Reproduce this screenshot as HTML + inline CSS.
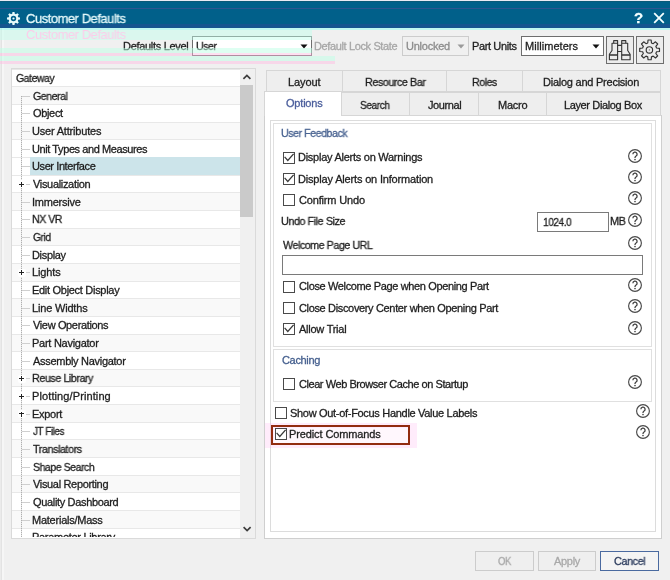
<!DOCTYPE html>
<html><head><meta charset="utf-8"><style>
html,body{margin:0;padding:0;background:#f0f0f0}
body{width:670px;height:580px;position:relative;overflow:hidden;background:#f0f0f0;font-family:"Liberation Sans",sans-serif}
.t{position:absolute;white-space:nowrap;font-family:"Liberation Sans",sans-serif;-webkit-text-stroke:0.3px currentColor;will-change:transform}
.r{position:absolute}
</style></head><body>
<div class="r" style="left:0px;top:0px;width:670px;height:1px;background:#eaeaf4"></div>
<div class="r" style="left:0px;top:1px;width:670px;height:27px;background:#01608a"></div>
<div class="r" style="left:0px;top:1px;width:670px;height:1px;background:#0a5a78"></div>
<div class="r" style="left:0px;top:8px;width:670px;height:1px;background:#2f5590"></div>
<div class="r" style="left:0px;top:24px;width:670px;height:4px;background:#15558f"></div>
<svg class="r" style="left:6px;top:11px" width="15" height="15" viewBox="0 0 15 15">
<path fill="#e8fbfb" fill-rule="evenodd" d="M6.23 2.77 L6.47 0.98 L8.53 0.98 L8.77 2.77 L9.95 3.26 L11.38 2.16 L12.84 3.62 L11.74 5.05 L12.23 6.23 L14.02 6.47 L14.02 8.53 L12.23 8.77 L11.74 9.95 L12.84 11.38 L11.38 12.84 L9.95 11.74 L8.77 12.23 L8.53 14.02 L6.47 14.02 L6.23 12.23 L5.05 11.74 L3.62 12.84 L2.16 11.38 L3.26 9.95 L2.77 8.77 L0.98 8.53 L0.98 6.47 L2.77 6.23 L3.26 5.05 L2.16 3.62 L3.62 2.16 L5.05 3.26Z M7.5 4.8a2.7 2.7 0 1 0 0 5.4a2.7 2.7 0 1 0 0-5.4z"/>
<circle cx="7.5" cy="7.5" r="1.1" fill="#e8fbfb"/></svg>
<div class="t" style="left:26.10px;top:12.10px;color:#e4f8fa;font-size:13px;line-height:13px;font-weight:normal;letter-spacing:-0.450px;transform:scaleX(0.995);transform-origin:0.00px 0;">Customer Defaults</div>
<div class="t" style="left:634.2px;top:9.5px;color:#f4ffff;font-size:15px;line-height:15px;font-weight:bold">?</div>
<svg class="r" style="left:653px;top:12px" width="12" height="12" viewBox="0 0 12 12"><path d="M1.2 1.2L10.8 10.8M10.8 1.2L1.2 10.8" stroke="#f4ffff" stroke-width="1.8"/></svg>
<div class="r" style="left:0px;top:28px;width:1px;height:552px;background:#ebebeb"></div>
<div class="r" style="left:1px;top:28px;width:1px;height:552px;background:#e3e3e3"></div>
<div class="r" style="left:2px;top:28px;width:2px;height:552px;background:#f6f6f6"></div>
<div class="t" style="left:122.80px;top:40.80px;color:#1e1e1e;font-size:11px;line-height:11px;font-weight:normal;letter-spacing:-0.308px;">Defaults Level</div>
<div class="r" style="left:192px;top:36px;width:120px;height:20px;background:#fff;border:1px solid #6e6e6e;box-sizing:border-box"></div>
<div class="t" style="left:196.20px;top:40.80px;color:#1e1e1e;font-size:11px;line-height:11px;font-weight:normal;letter-spacing:-0.450px;transform:scaleX(0.954);transform-origin:1.00px 0;">User</div>
<svg class="r" style="left:300px;top:44px" width="8" height="5" viewBox="0 0 8 5"><path d="M0.5 0.5h7L4 4.5z" fill="#111"/></svg>
<div class="t" style="left:313.80px;top:40.80px;color:#a6a6a6;font-size:11px;line-height:11px;font-weight:normal;letter-spacing:-0.371px;">Default Lock State</div>
<div class="r" style="left:402px;top:36px;width:67px;height:20px;background:#f0f0f0;border:1px solid #cccccc;box-sizing:border-box"></div>
<div class="t" style="left:405.90px;top:40.80px;color:#8c8c8c;font-size:11px;line-height:11px;font-weight:normal;letter-spacing:-0.243px;">Unlocked</div>
<svg class="r" style="left:457px;top:44px" width="8" height="5" viewBox="0 0 8 5"><path d="M0.5 0.5h7L4 4.5z" fill="#9a9a9a"/></svg>
<div class="t" style="left:471.60px;top:40.80px;color:#1e1e1e;font-size:11px;line-height:11px;font-weight:normal;letter-spacing:-0.378px;">Part Units</div>
<div class="r" style="left:521px;top:36px;width:83px;height:20px;background:#fff;border:1px solid #6e6e6e;box-sizing:border-box"></div>
<div class="t" style="left:524.60px;top:40.80px;color:#1e1e1e;font-size:11px;line-height:11px;font-weight:normal;letter-spacing:0.050px;">Millimeters</div>
<svg class="r" style="left:592px;top:44px" width="8" height="5" viewBox="0 0 8 5"><path d="M0.5 0.5h7L4 4.5z" fill="#111"/></svg>
<div class="r" style="left:606px;top:36px;width:28px;height:28px;background:#ececec;border:1px solid #6e6e6e;box-sizing:border-box"></div>
<div class="r" style="left:636px;top:36px;width:28px;height:28px;background:#ececec;border:1px solid #6e6e6e;box-sizing:border-box"></div>
<svg class="r" style="left:606px;top:36px" width="28" height="28" viewBox="0 0 28 28">
<g fill="none" stroke="#333" stroke-width="1.1" stroke-linejoin="round">
<path d="M7.7 7.2V4.6h3.9v2.6M15.7 7.2V4.6h4.1v2.6"/>
<path d="M6 7.2h5.6v16.5H3.4v-5.4L6 14.5z"/>
<path d="M21.7 7.2h-6v16.5h8.4v-5.4L21.7 14.5z"/>
<path d="M11.6 9.4h4.1M11.6 15.5h4.1"/>
<path d="M3.4 19h8.2M15.7 19h8.4" stroke-width="1.5"/>
</g></svg>
<svg class="r" style="left:636px;top:36px" width="28" height="28" viewBox="0 0 28 28">
<g fill="none" stroke="#333" stroke-width="1.15" stroke-linejoin="round">
<path d="M11.74 6.95 L12.04 4.02 L15.16 4.02 L15.46 6.95 L17.20 7.66 L19.48 5.81 L21.69 8.02 L19.84 10.30 L20.55 12.04 L23.48 12.34 L23.48 15.46 L20.55 15.76 L19.84 17.50 L21.69 19.78 L19.48 21.99 L17.20 20.14 L15.46 20.85 L15.16 23.78 L12.04 23.78 L11.74 20.85 L10.00 20.14 L7.72 21.99 L5.51 19.78 L7.36 17.50 L6.65 15.76 L3.72 15.46 L3.72 12.34 L6.65 12.04 L7.36 10.30 L5.51 8.02 L7.72 5.81 L10.00 7.66Z"/>
<circle cx="13.4" cy="13.9" r="3.2"/>
</g><circle cx="13.4" cy="13.9" r="0.7" fill="#777"/></svg>
<div class="r" style="left:11px;top:68px;width:245px;height:471px;background:#fff;border:1px solid #dadada;box-sizing:border-box"></div>
<div class="r" style="left:12px;top:69px;width:228px;height:468px;overflow:hidden">
<div class="r" style="left:0px;top:-0.40px;width:228px;height:17.66px;background:#ffffff;border-top:1px solid #e8e8e8;box-sizing:border-box"></div>
<div class="t" style="left:4.20px;top:4.00px;color:#1e1e1e;font-size:11px;line-height:11px;font-weight:normal;letter-spacing:-0.450px;transform:scaleX(0.949);transform-origin:0.00px 0;">Gateway</div>
<div class="r" style="left:0px;top:17.26px;width:228px;height:17.66px;background:#f9f9f9;border-top:1px solid #e8e8e8;box-sizing:border-box"></div>
<div class="t" style="left:21.00px;top:21.66px;color:#1e1e1e;font-size:11px;line-height:11px;font-weight:normal;letter-spacing:-0.450px;transform:scaleX(0.959);transform-origin:0.00px 0;">General</div>
<div class="r" style="left:10px;top:26.66px;width:7.5px;height:1px;background:#cfcfcf"></div>
<div class="r" style="left:0px;top:34.92px;width:228px;height:17.66px;background:#ffffff;border-top:1px solid #e8e8e8;box-sizing:border-box"></div>
<div class="t" style="left:21.00px;top:39.32px;color:#1e1e1e;font-size:11px;line-height:11px;font-weight:normal;letter-spacing:-0.340px;">Object</div>
<div class="r" style="left:10px;top:44.32px;width:7.5px;height:1px;background:#cfcfcf"></div>
<div class="r" style="left:0px;top:52.58px;width:228px;height:17.66px;background:#f9f9f9;border-top:1px solid #e8e8e8;box-sizing:border-box"></div>
<div class="t" style="left:20.00px;top:56.98px;color:#1e1e1e;font-size:11px;line-height:11px;font-weight:normal;letter-spacing:-0.193px;">User Attributes</div>
<div class="r" style="left:10px;top:61.98px;width:7.5px;height:1px;background:#cfcfcf"></div>
<div class="r" style="left:0px;top:70.24px;width:228px;height:17.66px;background:#ffffff;border-top:1px solid #e8e8e8;box-sizing:border-box"></div>
<div class="t" style="left:20.00px;top:74.64px;color:#1e1e1e;font-size:11px;line-height:11px;font-weight:normal;letter-spacing:-0.409px;">Unit Types and Measures</div>
<div class="r" style="left:10px;top:79.64px;width:7.5px;height:1px;background:#cfcfcf"></div>
<div class="r" style="left:0px;top:87.90px;width:228px;height:17.66px;background:#fff;border-top:1px solid #e8e8e8;box-sizing:border-box"></div>
<div class="r" style="left:17.6px;top:88.30px;width:211px;height:17.26px;background:#cce4ea"></div>
<div class="t" style="left:20.00px;top:92.30px;color:#1e1e1e;font-size:11px;line-height:11px;font-weight:normal;letter-spacing:-0.408px;">User Interface</div>
<div class="r" style="left:10px;top:97.30px;width:7.5px;height:1px;background:#cfcfcf"></div>
<div class="r" style="left:0px;top:105.56px;width:228px;height:17.66px;background:#ffffff;border-top:1px solid #e8e8e8;box-sizing:border-box"></div>
<div class="t" style="left:21.00px;top:109.96px;color:#1e1e1e;font-size:11px;line-height:11px;font-weight:normal;letter-spacing:-0.325px;">Visualization</div>
<div class="r" style="left:10px;top:114.96px;width:7.5px;height:1px;background:#cfcfcf"></div>
<div class="r" style="left:0px;top:123.22px;width:228px;height:17.66px;background:#f9f9f9;border-top:1px solid #e8e8e8;box-sizing:border-box"></div>
<div class="t" style="left:20.00px;top:127.62px;color:#1e1e1e;font-size:11px;line-height:11px;font-weight:normal;letter-spacing:-0.225px;">Immersive</div>
<div class="r" style="left:10px;top:132.62px;width:7.5px;height:1px;background:#cfcfcf"></div>
<div class="r" style="left:0px;top:140.88px;width:228px;height:17.66px;background:#ffffff;border-top:1px solid #e8e8e8;box-sizing:border-box"></div>
<div class="t" style="left:20.00px;top:145.28px;color:#1e1e1e;font-size:11px;line-height:11px;font-weight:normal;letter-spacing:-0.450px;transform:scaleX(0.957);transform-origin:1.00px 0;">NX VR</div>
<div class="r" style="left:10px;top:150.28px;width:7.5px;height:1px;background:#cfcfcf"></div>
<div class="r" style="left:0px;top:158.54px;width:228px;height:17.66px;background:#f9f9f9;border-top:1px solid #e8e8e8;box-sizing:border-box"></div>
<div class="t" style="left:21.00px;top:162.94px;color:#1e1e1e;font-size:11px;line-height:11px;font-weight:normal;letter-spacing:-0.450px;transform:scaleX(0.936);transform-origin:0.00px 0;">Grid</div>
<div class="r" style="left:10px;top:167.94px;width:7.5px;height:1px;background:#cfcfcf"></div>
<div class="r" style="left:0px;top:176.20px;width:228px;height:17.66px;background:#ffffff;border-top:1px solid #e8e8e8;box-sizing:border-box"></div>
<div class="t" style="left:20.00px;top:180.60px;color:#1e1e1e;font-size:11px;line-height:11px;font-weight:normal;letter-spacing:-0.333px;">Display</div>
<div class="r" style="left:10px;top:185.60px;width:7.5px;height:1px;background:#cfcfcf"></div>
<div class="r" style="left:0px;top:193.86px;width:228px;height:17.66px;background:#f9f9f9;border-top:1px solid #e8e8e8;box-sizing:border-box"></div>
<div class="t" style="left:20.00px;top:198.26px;color:#1e1e1e;font-size:11px;line-height:11px;font-weight:normal;letter-spacing:-0.120px;">Lights</div>
<div class="r" style="left:10px;top:203.26px;width:7.5px;height:1px;background:#cfcfcf"></div>
<div class="r" style="left:0px;top:211.52px;width:228px;height:17.66px;background:#ffffff;border-top:1px solid #e8e8e8;box-sizing:border-box"></div>
<div class="t" style="left:20.00px;top:215.92px;color:#1e1e1e;font-size:11px;line-height:11px;font-weight:normal;letter-spacing:-0.294px;">Edit Object Display</div>
<div class="r" style="left:10px;top:220.92px;width:7.5px;height:1px;background:#cfcfcf"></div>
<div class="r" style="left:0px;top:229.18px;width:228px;height:17.66px;background:#f9f9f9;border-top:1px solid #e8e8e8;box-sizing:border-box"></div>
<div class="t" style="left:20.00px;top:233.58px;color:#1e1e1e;font-size:11px;line-height:11px;font-weight:normal;letter-spacing:-0.180px;">Line Widths</div>
<div class="r" style="left:10px;top:238.58px;width:7.5px;height:1px;background:#cfcfcf"></div>
<div class="r" style="left:0px;top:246.84px;width:228px;height:17.66px;background:#ffffff;border-top:1px solid #e8e8e8;box-sizing:border-box"></div>
<div class="t" style="left:21.00px;top:251.24px;color:#1e1e1e;font-size:11px;line-height:11px;font-weight:normal;letter-spacing:-0.357px;">View Operations</div>
<div class="r" style="left:10px;top:256.24px;width:7.5px;height:1px;background:#cfcfcf"></div>
<div class="r" style="left:0px;top:264.50px;width:228px;height:17.66px;background:#f9f9f9;border-top:1px solid #e8e8e8;box-sizing:border-box"></div>
<div class="t" style="left:20.00px;top:268.90px;color:#1e1e1e;font-size:11px;line-height:11px;font-weight:normal;letter-spacing:-0.269px;">Part Navigator</div>
<div class="r" style="left:10px;top:273.90px;width:7.5px;height:1px;background:#cfcfcf"></div>
<div class="r" style="left:0px;top:282.16px;width:228px;height:17.66px;background:#ffffff;border-top:1px solid #e8e8e8;box-sizing:border-box"></div>
<div class="t" style="left:21.00px;top:286.56px;color:#1e1e1e;font-size:11px;line-height:11px;font-weight:normal;letter-spacing:-0.294px;">Assembly Navigator</div>
<div class="r" style="left:10px;top:291.56px;width:7.5px;height:1px;background:#cfcfcf"></div>
<div class="r" style="left:0px;top:299.82px;width:228px;height:17.66px;background:#f9f9f9;border-top:1px solid #e8e8e8;box-sizing:border-box"></div>
<div class="t" style="left:20.00px;top:304.22px;color:#1e1e1e;font-size:11px;line-height:11px;font-weight:normal;letter-spacing:-0.450px;transform:scaleX(0.974);transform-origin:1.00px 0;">Reuse Library</div>
<div class="r" style="left:10px;top:309.22px;width:7.5px;height:1px;background:#cfcfcf"></div>
<div class="r" style="left:0px;top:317.48px;width:228px;height:17.66px;background:#ffffff;border-top:1px solid #e8e8e8;box-sizing:border-box"></div>
<div class="t" style="left:20.00px;top:321.88px;color:#1e1e1e;font-size:11px;line-height:11px;font-weight:normal;letter-spacing:0.106px;">Plotting/Printing</div>
<div class="r" style="left:10px;top:326.88px;width:7.5px;height:1px;background:#cfcfcf"></div>
<div class="r" style="left:0px;top:335.14px;width:228px;height:17.66px;background:#f9f9f9;border-top:1px solid #e8e8e8;box-sizing:border-box"></div>
<div class="t" style="left:20.00px;top:339.54px;color:#1e1e1e;font-size:11px;line-height:11px;font-weight:normal;letter-spacing:-0.280px;">Export</div>
<div class="r" style="left:10px;top:344.54px;width:7.5px;height:1px;background:#cfcfcf"></div>
<div class="r" style="left:0px;top:352.80px;width:228px;height:17.66px;background:#ffffff;border-top:1px solid #e8e8e8;box-sizing:border-box"></div>
<div class="t" style="left:21.00px;top:357.20px;color:#1e1e1e;font-size:11px;line-height:11px;font-weight:normal;letter-spacing:-0.450px;transform:scaleX(0.895);transform-origin:0.00px 0;">JT Files</div>
<div class="r" style="left:10px;top:362.20px;width:7.5px;height:1px;background:#cfcfcf"></div>
<div class="r" style="left:0px;top:370.46px;width:228px;height:17.66px;background:#f9f9f9;border-top:1px solid #e8e8e8;box-sizing:border-box"></div>
<div class="t" style="left:21.00px;top:374.86px;color:#1e1e1e;font-size:11px;line-height:11px;font-weight:normal;letter-spacing:-0.450px;transform:scaleX(0.982);transform-origin:0.00px 0;">Translators</div>
<div class="r" style="left:10px;top:379.86px;width:7.5px;height:1px;background:#cfcfcf"></div>
<div class="r" style="left:0px;top:388.12px;width:228px;height:17.66px;background:#ffffff;border-top:1px solid #e8e8e8;box-sizing:border-box"></div>
<div class="t" style="left:21.00px;top:392.52px;color:#1e1e1e;font-size:11px;line-height:11px;font-weight:normal;letter-spacing:-0.450px;transform:scaleX(0.952);transform-origin:0.00px 0;">Shape Search</div>
<div class="r" style="left:10px;top:397.52px;width:7.5px;height:1px;background:#cfcfcf"></div>
<div class="r" style="left:0px;top:405.78px;width:228px;height:17.66px;background:#f9f9f9;border-top:1px solid #e8e8e8;box-sizing:border-box"></div>
<div class="t" style="left:21.00px;top:410.18px;color:#1e1e1e;font-size:11px;line-height:11px;font-weight:normal;letter-spacing:-0.333px;">Visual Reporting</div>
<div class="r" style="left:10px;top:415.18px;width:7.5px;height:1px;background:#cfcfcf"></div>
<div class="r" style="left:0px;top:423.44px;width:228px;height:17.66px;background:#ffffff;border-top:1px solid #e8e8e8;box-sizing:border-box"></div>
<div class="t" style="left:21.00px;top:427.84px;color:#1e1e1e;font-size:11px;line-height:11px;font-weight:normal;letter-spacing:-0.338px;">Quality Dashboard</div>
<div class="r" style="left:10px;top:432.84px;width:7.5px;height:1px;background:#cfcfcf"></div>
<div class="r" style="left:0px;top:441.10px;width:228px;height:17.66px;background:#f9f9f9;border-top:1px solid #e8e8e8;box-sizing:border-box"></div>
<div class="t" style="left:20.00px;top:445.50px;color:#1e1e1e;font-size:11px;line-height:11px;font-weight:normal;letter-spacing:-0.238px;">Materials/Mass</div>
<div class="r" style="left:10px;top:450.50px;width:7.5px;height:1px;background:#cfcfcf"></div>
<div class="r" style="left:0px;top:458.76px;width:228px;height:17.66px;background:#ffffff;border-top:1px solid #e8e8e8;box-sizing:border-box"></div>
<div class="t" style="left:20.00px;top:463.16px;color:#1e1e1e;font-size:11px;line-height:11px;font-weight:normal;letter-spacing:-0.300px;">Parameter Library</div>
<div class="r" style="left:10px;top:468.16px;width:7.5px;height:1px;background:#cfcfcf"></div>
<div class="r" style="left:9px;top:27px;width:1px;height:441px;background:repeating-linear-gradient(#b0b0b0 0 1px,#e4e4e4 1px 2px)"></div>
<div class="r" style="left:5.5px;top:111.46px;width:8px;height:8px;background:#fff;border-radius:2px"></div>
<div class="r" style="left:7px;top:114.81px;width:5px;height:1.1px;background:#222"></div>
<div class="r" style="left:8.85px;top:112.96px;width:1.1px;height:5px;background:#222"></div>
<div class="r" style="left:13.5px;top:114.96px;width:4px;height:1px;background:#cfcfcf"></div>
<div class="r" style="left:5.5px;top:199.76px;width:8px;height:8px;background:#fff;border-radius:2px"></div>
<div class="r" style="left:7px;top:203.11px;width:5px;height:1.1px;background:#222"></div>
<div class="r" style="left:8.85px;top:201.26px;width:1.1px;height:5px;background:#222"></div>
<div class="r" style="left:13.5px;top:203.26px;width:4px;height:1px;background:#cfcfcf"></div>
<div class="r" style="left:5.5px;top:305.72px;width:8px;height:8px;background:#fff;border-radius:2px"></div>
<div class="r" style="left:7px;top:309.07px;width:5px;height:1.1px;background:#222"></div>
<div class="r" style="left:8.85px;top:307.22px;width:1.1px;height:5px;background:#222"></div>
<div class="r" style="left:13.5px;top:309.22px;width:4px;height:1px;background:#cfcfcf"></div>
<div class="r" style="left:5.5px;top:323.38px;width:8px;height:8px;background:#fff;border-radius:2px"></div>
<div class="r" style="left:7px;top:326.73px;width:5px;height:1.1px;background:#222"></div>
<div class="r" style="left:8.85px;top:324.88px;width:1.1px;height:5px;background:#222"></div>
<div class="r" style="left:13.5px;top:326.88px;width:4px;height:1px;background:#cfcfcf"></div>
<div class="r" style="left:5.5px;top:341.04px;width:8px;height:8px;background:#fff;border-radius:2px"></div>
<div class="r" style="left:7px;top:344.39px;width:5px;height:1.1px;background:#222"></div>
<div class="r" style="left:8.85px;top:342.54px;width:1.1px;height:5px;background:#222"></div>
<div class="r" style="left:13.5px;top:344.54px;width:4px;height:1px;background:#cfcfcf"></div>
</div>
<div class="r" style="left:240px;top:69px;width:15px;height:469px;background:#f0f0f0"></div>
<div class="r" style="left:240px;top:85px;width:13px;height:132px;background:#cacaca"></div>
<svg class="r" style="left:242px;top:74px" width="10" height="6" viewBox="0 0 10 6"><path d="M1.4 4.9L4.9 1.5 8.4 4.9" fill="none" stroke="#3c3c3c" stroke-width="1.7"/></svg>
<svg class="r" style="left:242px;top:526px" width="10" height="6" viewBox="0 0 10 6"><path d="M1.6 1.1L5.1 4.5 8.6 1.1" fill="none" stroke="#3c3c3c" stroke-width="1.7"/></svg>
<div class="r" style="left:266px;top:70px;width:77px;height:22px;background:#eeeeee;border:1px solid #d6d6d6;box-sizing:border-box"></div>
<div class="t" style="left:288.30px;top:76.80px;color:#1e1e1e;font-size:11px;line-height:11px;font-weight:normal;letter-spacing:-0.080px;">Layout</div>
<div class="r" style="left:342px;top:70px;width:105px;height:22px;background:#eeeeee;border:1px solid #d6d6d6;box-sizing:border-box"></div>
<div class="t" style="left:364.50px;top:76.80px;color:#1e1e1e;font-size:11px;line-height:11px;font-weight:normal;letter-spacing:-0.450px;transform:scaleX(0.976);transform-origin:1.00px 0;">Resource Bar</div>
<div class="r" style="left:446px;top:70px;width:77px;height:22px;background:#eeeeee;border:1px solid #d6d6d6;box-sizing:border-box"></div>
<div class="t" style="left:471.80px;top:76.80px;color:#1e1e1e;font-size:11px;line-height:11px;font-weight:normal;letter-spacing:-0.450px;transform:scaleX(0.960);transform-origin:1.00px 0;">Roles</div>
<div class="r" style="left:522px;top:70px;width:139px;height:22px;background:#eeeeee;border:1px solid #d6d6d6;box-sizing:border-box"></div>
<div class="t" style="left:542.80px;top:76.80px;color:#1e1e1e;font-size:11px;line-height:11px;font-weight:normal;letter-spacing:-0.242px;">Dialog and Precision</div>
<div class="r" style="left:264px;top:115px;width:398px;height:424px;background:#fff;border:1px solid #cfcfcf;box-sizing:border-box"></div>
<div class="r" style="left:341px;top:92px;width:69px;height:24px;background:#eeeeee;border:1px solid #d6d6d6;box-sizing:border-box"></div>
<div class="t" style="left:359.90px;top:100.10px;color:#1e1e1e;font-size:11px;line-height:11px;font-weight:normal;letter-spacing:-0.450px;transform:scaleX(0.919);transform-origin:0.00px 0;">Search</div>
<div class="r" style="left:409px;top:92px;width:70px;height:24px;background:#eeeeee;border:1px solid #d6d6d6;box-sizing:border-box"></div>
<div class="t" style="left:427.60px;top:100.10px;color:#1e1e1e;font-size:11px;line-height:11px;font-weight:normal;letter-spacing:-0.417px;">Journal</div>
<div class="r" style="left:478px;top:92px;width:69px;height:24px;background:#eeeeee;border:1px solid #d6d6d6;box-sizing:border-box"></div>
<div class="t" style="left:497.60px;top:100.10px;color:#1e1e1e;font-size:11px;line-height:11px;font-weight:normal;letter-spacing:-0.250px;">Macro</div>
<div class="r" style="left:546px;top:92px;width:115px;height:24px;background:#eeeeee;border:1px solid #d6d6d6;box-sizing:border-box"></div>
<div class="t" style="left:564.30px;top:100.10px;color:#1e1e1e;font-size:11px;line-height:11px;font-weight:normal;letter-spacing:-0.373px;">Layer Dialog Box</div>
<div class="r" style="left:264px;top:91px;width:78px;height:25px;background:#ffffff;border:1px solid #d6d6d6;box-sizing:border-box;border-bottom:none"></div>
<div class="t" style="left:286.00px;top:98.40px;color:#4b5e9c;font-size:11px;line-height:11px;font-weight:normal;letter-spacing:-0.200px;">Options</div>
<div class="r" style="left:265px;top:114px;width:76px;height:3px;background:#fff"></div>
<div class="r" style="left:270px;top:120px;width:386px;height:412px;border:1px solid #dcdcdc;box-sizing:border-box"></div>
<div class="r" style="left:273px;top:123px;width:379px;height:224px;border:1px solid #e0e0e0;box-sizing:border-box"></div>
<div class="r" style="left:273px;top:349px;width:379px;height:53px;border:1px solid #e0e0e0;box-sizing:border-box"></div>
<div class="t" style="left:281.20px;top:128.10px;color:#46608f;font-size:11px;line-height:11px;font-weight:normal;letter-spacing:-0.450px;transform:scaleX(0.962);transform-origin:1.00px 0;">User Feedback</div>
<div class="t" style="left:282.00px;top:354.70px;color:#46608f;font-size:11px;line-height:11px;font-weight:normal;letter-spacing:-0.333px;">Caching</div>
<div class="r" style="left:283px;top:152px;width:12px;height:12px;background:#fff;border:1px solid #4a4a4a;box-sizing:border-box"></div>
<svg class="r" style="left:283px;top:152px" width="12" height="12" viewBox="0 0 12 12"><path d="M1.6 4.9L4.8 8.5 10.6 1.9" fill="none" stroke="#3a3a3a" stroke-width="1.3"/></svg>
<div class="t" style="left:297.60px;top:152.20px;color:#1e1e1e;font-size:11px;line-height:11px;font-weight:normal;letter-spacing:-0.260px;">Display Alerts on Warnings</div>
<svg class="r" style="left:627.2px;top:147.5px" width="16" height="16" viewBox="0 0 16 16"><circle cx="8" cy="8" r="6.4" fill="none" stroke="#4a4a4a" stroke-width="1.15"/><path d="M5.9 6.3a2.1 2.1 0 1 1 3.2 1.7c-.8.5-1.1.9-1.1 1.7v.4" fill="none" stroke="#404040" stroke-width="1.3"/><circle cx="8" cy="11.6" r="0.8" fill="#404040"/></svg>
<div class="r" style="left:283px;top:173px;width:12px;height:12px;background:#fff;border:1px solid #4a4a4a;box-sizing:border-box"></div>
<svg class="r" style="left:283px;top:173px" width="12" height="12" viewBox="0 0 12 12"><path d="M1.6 4.9L4.8 8.5 10.6 1.9" fill="none" stroke="#3a3a3a" stroke-width="1.3"/></svg>
<div class="t" style="left:297.60px;top:173.50px;color:#1e1e1e;font-size:11px;line-height:11px;font-weight:normal;letter-spacing:-0.171px;">Display Alerts on Information</div>
<svg class="r" style="left:627.2px;top:168.8px" width="16" height="16" viewBox="0 0 16 16"><circle cx="8" cy="8" r="6.4" fill="none" stroke="#4a4a4a" stroke-width="1.15"/><path d="M5.9 6.3a2.1 2.1 0 1 1 3.2 1.7c-.8.5-1.1.9-1.1 1.7v.4" fill="none" stroke="#404040" stroke-width="1.3"/><circle cx="8" cy="11.6" r="0.8" fill="#404040"/></svg>
<div class="r" style="left:283px;top:194px;width:12px;height:12px;background:#fff;border:1px solid #4a4a4a;box-sizing:border-box"></div>
<div class="t" style="left:298.60px;top:194.80px;color:#1e1e1e;font-size:11px;line-height:11px;font-weight:normal;letter-spacing:-0.164px;">Confirm Undo</div>
<svg class="r" style="left:627.2px;top:190.1px" width="16" height="16" viewBox="0 0 16 16"><circle cx="8" cy="8" r="6.4" fill="none" stroke="#4a4a4a" stroke-width="1.15"/><path d="M5.9 6.3a2.1 2.1 0 1 1 3.2 1.7c-.8.5-1.1.9-1.1 1.7v.4" fill="none" stroke="#404040" stroke-width="1.3"/><circle cx="8" cy="11.6" r="0.8" fill="#404040"/></svg>
<div class="t" style="left:281.40px;top:215.90px;color:#1e1e1e;font-size:11px;line-height:11px;font-weight:normal;letter-spacing:-0.450px;transform:scaleX(0.982);transform-origin:1.00px 0;">Undo File Size</div>
<div class="r" style="left:537px;top:212px;width:72px;height:20px;background:#fff;border:1px solid #7a7a7a;box-sizing:border-box"></div>
<div class="t" style="left:543.30px;top:216.90px;color:#1e1e1e;font-size:11px;line-height:11px;font-weight:normal;letter-spacing:-0.450px;transform:scaleX(0.911);transform-origin:1.00px 0;">1024.0</div>
<div class="t" style="left:610.40px;top:215.90px;color:#1e1e1e;font-size:11px;line-height:11px;font-weight:normal;letter-spacing:-0.450px;transform:scaleX(0.983);transform-origin:1.00px 0;">MB</div>
<svg class="r" style="left:627.2px;top:211.6px" width="16" height="16" viewBox="0 0 16 16"><circle cx="8" cy="8" r="6.4" fill="none" stroke="#4a4a4a" stroke-width="1.15"/><path d="M5.9 6.3a2.1 2.1 0 1 1 3.2 1.7c-.8.5-1.1.9-1.1 1.7v.4" fill="none" stroke="#404040" stroke-width="1.3"/><circle cx="8" cy="11.6" r="0.8" fill="#404040"/></svg>
<div class="t" style="left:282.50px;top:239.60px;color:#1e1e1e;font-size:11px;line-height:11px;font-weight:normal;letter-spacing:-0.450px;transform:scaleX(0.970);transform-origin:0.00px 0;">Welcome Page URL</div>
<svg class="r" style="left:627.2px;top:234.9px" width="16" height="16" viewBox="0 0 16 16"><circle cx="8" cy="8" r="6.4" fill="none" stroke="#4a4a4a" stroke-width="1.15"/><path d="M5.9 6.3a2.1 2.1 0 1 1 3.2 1.7c-.8.5-1.1.9-1.1 1.7v.4" fill="none" stroke="#404040" stroke-width="1.3"/><circle cx="8" cy="11.6" r="0.8" fill="#404040"/></svg>
<div class="r" style="left:282px;top:255px;width:361px;height:20px;background:#fff;border:1px solid #7a7a7a;box-sizing:border-box"></div>
<div class="r" style="left:283px;top:281px;width:12px;height:12px;background:#fff;border:1px solid #4a4a4a;box-sizing:border-box"></div>
<div class="t" style="left:298.60px;top:281.30px;color:#1e1e1e;font-size:11px;line-height:11px;font-weight:normal;letter-spacing:-0.363px;">Close Welcome Page when Opening Part</div>
<svg class="r" style="left:627.2px;top:277.0px" width="16" height="16" viewBox="0 0 16 16"><circle cx="8" cy="8" r="6.4" fill="none" stroke="#4a4a4a" stroke-width="1.15"/><path d="M5.9 6.3a2.1 2.1 0 1 1 3.2 1.7c-.8.5-1.1.9-1.1 1.7v.4" fill="none" stroke="#404040" stroke-width="1.3"/><circle cx="8" cy="11.6" r="0.8" fill="#404040"/></svg>
<div class="r" style="left:283px;top:302px;width:12px;height:12px;background:#fff;border:1px solid #4a4a4a;box-sizing:border-box"></div>
<div class="t" style="left:298.60px;top:302.60px;color:#1e1e1e;font-size:11px;line-height:11px;font-weight:normal;letter-spacing:-0.346px;">Close Discovery Center when Opening Part</div>
<svg class="r" style="left:627.2px;top:298.3px" width="16" height="16" viewBox="0 0 16 16"><circle cx="8" cy="8" r="6.4" fill="none" stroke="#4a4a4a" stroke-width="1.15"/><path d="M5.9 6.3a2.1 2.1 0 1 1 3.2 1.7c-.8.5-1.1.9-1.1 1.7v.4" fill="none" stroke="#404040" stroke-width="1.3"/><circle cx="8" cy="11.6" r="0.8" fill="#404040"/></svg>
<div class="r" style="left:283px;top:323px;width:12px;height:12px;background:#fff;border:1px solid #4a4a4a;box-sizing:border-box"></div>
<svg class="r" style="left:283px;top:323px" width="12" height="12" viewBox="0 0 12 12"><path d="M1.6 4.9L4.8 8.5 10.6 1.9" fill="none" stroke="#3a3a3a" stroke-width="1.3"/></svg>
<div class="t" style="left:298.60px;top:323.90px;color:#1e1e1e;font-size:11px;line-height:11px;font-weight:normal;letter-spacing:-0.250px;">Allow Trial</div>
<svg class="r" style="left:627.2px;top:319.7px" width="16" height="16" viewBox="0 0 16 16"><circle cx="8" cy="8" r="6.4" fill="none" stroke="#4a4a4a" stroke-width="1.15"/><path d="M5.9 6.3a2.1 2.1 0 1 1 3.2 1.7c-.8.5-1.1.9-1.1 1.7v.4" fill="none" stroke="#404040" stroke-width="1.3"/><circle cx="8" cy="11.6" r="0.8" fill="#404040"/></svg>
<div class="r" style="left:283px;top:378px;width:12px;height:12px;background:#fff;border:1px solid #4a4a4a;box-sizing:border-box"></div>
<div class="t" style="left:298.50px;top:378.70px;color:#1e1e1e;font-size:11px;line-height:11px;font-weight:normal;letter-spacing:-0.439px;">Clear Web Browser Cache on Startup</div>
<svg class="r" style="left:627.0px;top:373.7px" width="16" height="16" viewBox="0 0 16 16"><circle cx="8" cy="8" r="6.4" fill="none" stroke="#4a4a4a" stroke-width="1.15"/><path d="M5.9 6.3a2.1 2.1 0 1 1 3.2 1.7c-.8.5-1.1.9-1.1 1.7v.4" fill="none" stroke="#404040" stroke-width="1.3"/><circle cx="8" cy="11.6" r="0.8" fill="#404040"/></svg>
<div class="r" style="left:275px;top:407px;width:12px;height:12px;background:#fff;border:1px solid #4a4a4a;box-sizing:border-box"></div>
<div class="t" style="left:290.30px;top:407.80px;color:#1e1e1e;font-size:11px;line-height:11px;font-weight:normal;letter-spacing:-0.306px;">Show Out-of-Focus Handle Value Labels</div>
<svg class="r" style="left:635.0px;top:402.9px" width="16" height="16" viewBox="0 0 16 16"><circle cx="8" cy="8" r="6.4" fill="none" stroke="#4a4a4a" stroke-width="1.15"/><path d="M5.9 6.3a2.1 2.1 0 1 1 3.2 1.7c-.8.5-1.1.9-1.1 1.7v.4" fill="none" stroke="#404040" stroke-width="1.3"/><circle cx="8" cy="11.6" r="0.8" fill="#404040"/></svg>
<div class="r" style="left:265px;top:423px;width:152px;height:25px;background:rgba(255,170,235,0.22)"></div>
<div class="r" style="left:273.5px;top:427.5px;width:134.0px;height:15.0px;background:rgba(255,255,255,0.6)"></div>
<div class="r" style="left:275px;top:428px;width:12px;height:12px;background:#fff;border:1px solid #4a4a4a;box-sizing:border-box"></div>
<svg class="r" style="left:275px;top:428px" width="12" height="12" viewBox="0 0 12 12"><path d="M1.6 4.9L4.8 8.5 10.6 1.9" fill="none" stroke="#3a3a3a" stroke-width="1.3"/></svg>
<div class="t" style="left:289.30px;top:429.10px;color:#1e1e1e;font-size:11px;line-height:11px;font-weight:normal;letter-spacing:-0.113px;">Predict Commands</div>
<svg class="r" style="left:635.0px;top:424.2px" width="16" height="16" viewBox="0 0 16 16"><circle cx="8" cy="8" r="6.4" fill="none" stroke="#4a4a4a" stroke-width="1.15"/><path d="M5.9 6.3a2.1 2.1 0 1 1 3.2 1.7c-.8.5-1.1.9-1.1 1.7v.4" fill="none" stroke="#404040" stroke-width="1.3"/><circle cx="8" cy="11.6" r="0.8" fill="#404040"/></svg>
<div class="r" style="left:271px;top:425px;width:139px;height:20px;border:2.5px solid #922d10;box-sizing:border-box"></div>
<div class="r" style="left:475px;top:551px;width:59px;height:20px;background:#efefef;border:1px solid #cccccc;box-sizing:border-box"></div>
<div class="t" style="left:497.70px;top:555.80px;color:#a8a8a8;font-size:11px;line-height:11px;font-weight:normal;letter-spacing:-0.450px;transform:scaleX(0.875);transform-origin:0.00px 0;">OK</div>
<div class="r" style="left:538px;top:551px;width:58px;height:20px;background:#efefef;border:1px solid #cccccc;box-sizing:border-box"></div>
<div class="t" style="left:554.00px;top:555.80px;color:#a8a8a8;font-size:11px;line-height:11px;font-weight:normal;letter-spacing:-0.300px;">Apply</div>
<div class="r" style="left:600px;top:551px;width:59px;height:20px;background:#f4f4f4;border:1px solid #4a6aa0;box-sizing:border-box"></div>
<div class="t" style="left:614.00px;top:556.30px;color:#2c3c5e;font-size:11px;line-height:11px;font-weight:normal;letter-spacing:-0.450px;transform:scaleX(0.986);transform-origin:0.00px 0;">Cancel</div>
<div class="r" style="left:0px;top:28px;width:670px;height:2px;background:rgba(150,255,240,0.55)"></div>
<div class="r" style="left:0px;top:30px;width:312px;height:10px;background:rgba(190,255,235,0.45)"></div>
<div class="t" style="left:26.10px;top:28.40px;color:#fccdea;font-size:13px;line-height:13px;font-weight:normal;letter-spacing:-0.450px;transform:scaleX(0.995);transform-origin:0.00px 0;-webkit-text-stroke:0">Customer Defaults</div>
<div class="r" style="left:0px;top:48px;width:312px;height:5px;background:rgba(190,255,230,0.5)"></div>
<div class="r" style="left:0px;top:53px;width:312px;height:3px;background:rgba(255,185,225,0.45)"></div>
<div class="r" style="left:0px;top:56px;width:335px;height:5px;background:rgba(190,255,230,0.5)"></div>
<div class="r" style="left:0px;top:61px;width:335px;height:3px;background:rgba(255,185,225,0.45)"></div>
</body></html>
